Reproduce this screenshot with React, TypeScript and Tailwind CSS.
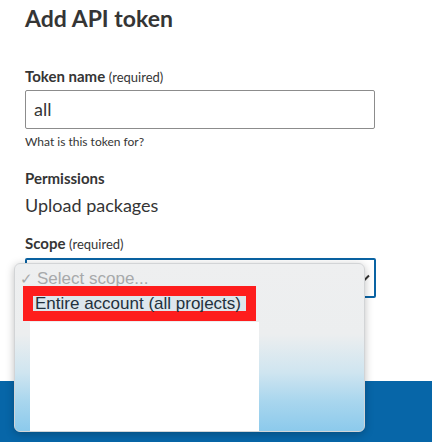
import React from "react";

export default function App() {
  return (
    <div className="relative flex min-h-[442px] w-[432px] flex-col overflow-hidden bg-white text-[#353535]" style={{ fontFamily: "Lato, 'Noto Sans', sans-serif" }}>
      <div className="flex flex-col px-[25px]">
        <h1 className="h-[36px] text-[23px] font-bold leading-[36px]">Add API token</h1>
        <div className="mt-[30px] h-[20px] text-[15px] font-bold leading-[20px]">
          Token name <span className="text-[13px] font-normal">(required)</span>
        </div>
        <div className="mt-[4px] flex h-[39px] w-[350px] items-center rounded-[2px] border border-[#8c8c8c] px-[8px] text-[18px]">
          all
        </div>
        <div className="mt-[5px] h-[16px] text-[12px] leading-[16px]">What is this token for?</div>
        <div className="mt-[18px] h-[20px] text-[15px] font-bold leading-[20px]">Permissions</div>
        <div className="mt-[5px] h-[24px] text-[18px] leading-[24px]">Upload packages</div>
        <div className="mt-[16px] h-[20px] text-[15px] font-bold leading-[20px]">
          Scope <span className="text-[13px] font-normal">(required)</span>
        </div>
        <div className="mt-[5px] flex h-[40px] w-[351px] items-center justify-end rounded-[2px] border-2 border-[#0a63a3] pr-[4px]">
          <svg width="12" height="8" viewBox="0 0 12 8" className="text-[#333]">
            <path d="M1 1.5 L6 6.5 L11 1.5" fill="none" stroke="currentColor" strokeWidth="2" />
          </svg>
        </div>
      </div>
      <div className="mt-[83px] h-[61px] w-full bg-[#0766a8]" />
      <div
        className="absolute left-[14px] top-[263px] flex h-[169px] w-[351px] flex-col items-start overflow-hidden rounded-[6px] border border-[#d2d4d6] bg-[linear-gradient(to_bottom,#eeeff0_0%,#eceeef_42%,#cfe5f0_65%,#a9d6ee_82%,#8ccaec_100%)] pt-[7px] shadow-[0_2px_8px_rgba(0,0,0,0.25)]"
        style={{ fontFamily: "'Liberation Sans', Arial, sans-serif" }}
      >
        <div className="ml-[5px] flex h-[15px] items-center gap-[4px] text-[17px] leading-[18px] text-[#a7a9ab]">
          <span className="text-[15px]">✓</span>
          <span>Select scope...</span>
        </div>
        <div className="ml-[8px] flex h-[35px] w-[233px] items-start bg-[#fe1d1d] pl-[10px] pt-[10px]">
          <div className="flex h-[15px] w-[213px] items-center overflow-visible whitespace-nowrap bg-[#dde6ec] pl-[2px] text-[17px] leading-[15px] text-[#23313c]">
            Entire account (all projects)
          </div>
        </div>
        <div className="ml-[15px] mt-[1px] h-[110px] w-[229px] bg-white" />
      </div>
    </div>
  );
}
